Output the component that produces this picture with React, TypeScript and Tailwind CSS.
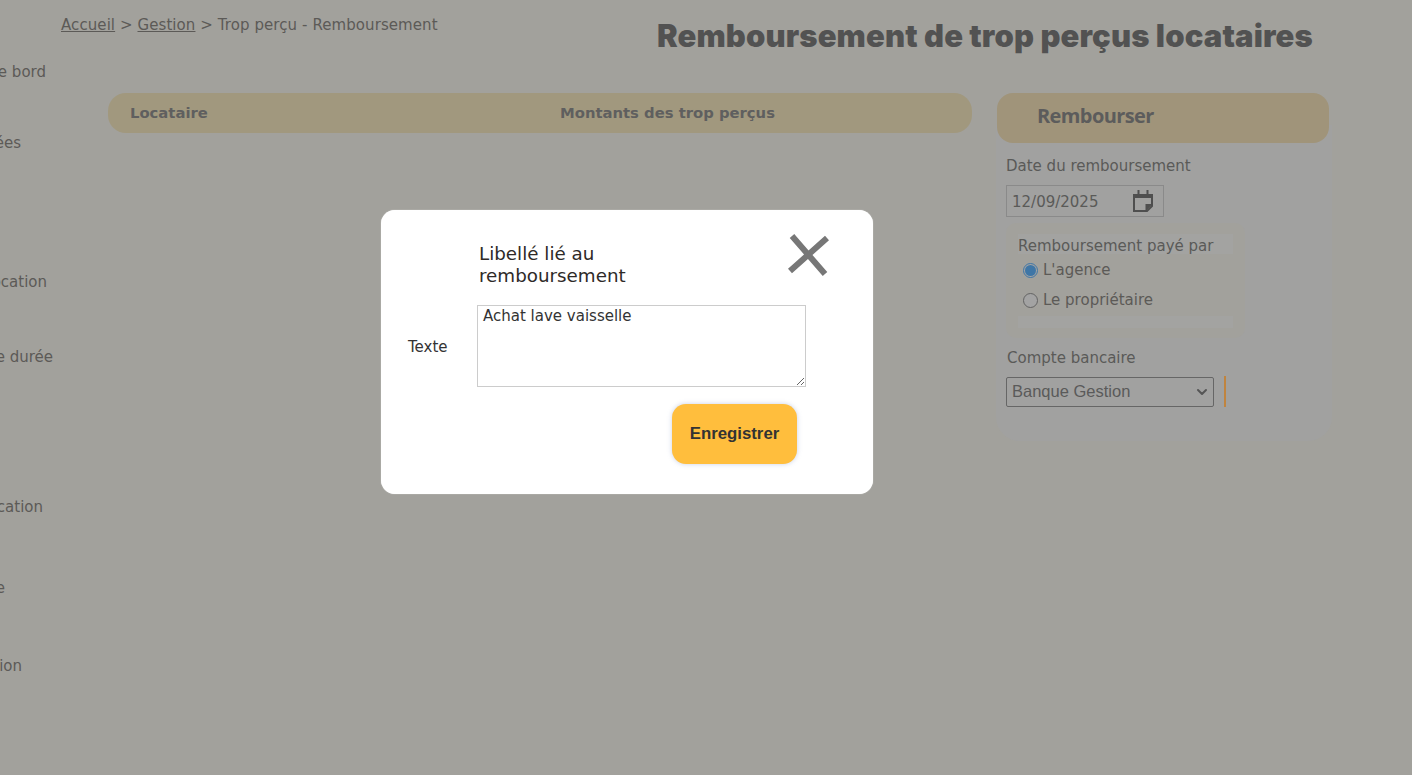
import { ChevronDown } from "lucide-react";

const sideItems = [
  { label: "Tableau de bord", cls: "mt-[62px] w-[46px]" },
  { label: "Données", cls: "mt-[51px] w-[21px]" },
  { label: "Location", cls: "mt-[119px] w-[47px]" },
  { label: "Longue durée", cls: "mt-[55px] w-[53px]" },
  { label: "Location", cls: "mt-[130px] w-[43px]" },
  { label: "Archive", cls: "mt-[61px] w-[5px]" },
  { label: "Gestion", cls: "mt-[58px] w-[22px]" },
];

function CalendarIcon() {
  return (
    <svg width="20" height="22" viewBox="0 0 20 22" fill="none" stroke="#4f4f4f" strokeWidth="2">
      <path d="M1 5h18v11l-5 5H1z" />
      <path d="M1 6.5h18" strokeWidth="3" />
      <path d="M5.5 0v4M14.5 0v4" />
      <path d="M19.5 14h-7v7.5z" fill="#4f4f4f" stroke="none" />
    </svg>
  );
}

function Radio({ checked, label }: { checked?: boolean; label: string }) {
  return (
    <label className="flex items-center gap-[5px] h-[20px]">
      <span className={`flex items-center justify-center w-[15px] h-[15px] rounded-full bg-[#a3a3a3] border ${checked ? "border-[#3f76a6]" : "border-[#636363]"}`}>
        {checked && <span className="w-[11px] h-[11px] rounded-full bg-[#3f76a6]" />}
      </span>
      <span className="text-[15px] text-[#5c5a57]">{label}</span>
    </label>
  );
}

function SidePanel() {
  return (
    <aside className="w-[336px] shrink-0">
      <div className="relative z-10 ml-[1px] w-[332px] h-[50px] rounded-[16px] bg-[#a0947a] pl-[40px] pb-[4px] flex items-center">
        <h2 className="text-[20px] font-bold tracking-[-0.6px] text-[#5c5c5c] font-['Open_Sans',sans-serif]">Rembourser</h2>
      </div>
      <div className="-mt-[18px] h-[316px] rounded-b-[24px] bg-[#a1a1a0] pt-[31px] px-[10px] text-[#5a5a58]">
        <p className="text-[15px] leading-[20px]">Date du remboursement</p>
        <div className="mt-[9px] w-[158px] h-[32px] border border-[#8a8a8a] flex items-center justify-between pl-[5px] pr-[10px]">
          <span className="pt-[2px] text-[15px]">12/09/2025</span>
          <CalendarIcon />
        </div>
        <div className="mt-[6px] w-[239px] h-[115px] rounded-[10px] bg-[#a2a19c] px-[12px] pt-[11px]">
          <div className="h-[20px] bg-[#a3a3a1] text-[15px] leading-[24px]">Remboursement payé par</div>
          <div className="mt-[6px] pl-[5px]">
            <Radio checked label="L'agence" />
            <div className="mt-[10px]">
              <Radio label="Le propriétaire" />
            </div>
          </div>
          <div className="mt-[6px] h-[12px] bg-[#a3a3a1]" />
        </div>
        <p className="mt-[10px] pl-[1px] text-[15px] leading-[20px]">Compte bancaire</p>
        <div className="mt-[8px] flex items-center gap-[10px]">
          <div className="w-[208px] h-[30px] border border-[#666] rounded-[2px] flex items-center justify-between pl-[5px] pr-[3px]">
            <span className="text-[16.5px] font-['Liberation_Sans',sans-serif] text-[#5a5a5a]">Banque Gestion</span>
            <ChevronDown size={16} strokeWidth={3} className="text-[#555]" />
          </div>
          <div className="w-[2px] h-[31px] bg-[#c0843f]" />
        </div>
      </div>
    </aside>
  );
}

export default function App() {
  return (
    <div className="relative flex w-[1412px] h-[775px] overflow-hidden bg-[#a2a19c] font-['DejaVu_Sans',sans-serif]">
      {/* Sidebar, mostly off screen */}
      <nav className="w-[61px] shrink-0 flex flex-col text-[15px] leading-[20px] text-[#5c5a57]">
        {sideItems.map((item, i) => (
          <div key={i} className={`${item.cls} flex justify-end whitespace-nowrap`}>
            {item.label}
          </div>
        ))}
      </nav>

      <main className="flex-1 min-w-0">
        <div className="flex h-[93px]">
          <div className="w-[596px] pt-[15px] text-[15px] leading-[20px] tracking-[0.08px] text-[#5c5a57] whitespace-nowrap">
            <a className="underline">Accueil</a> &gt; <a className="underline">Gestion</a> &gt; Trop perçu - Remboursement
          </div>
          <h1 className="pt-[18px] text-[31px] leading-[36px] font-black tracking-[0.13px] text-[#525252] font-['Inter',sans-serif] whitespace-nowrap">
            Remboursement de trop perçus locataires
          </h1>
        </div>
        <div className="flex pl-[47px] gap-[24px]">
          <div className="w-[864px] h-[40px] rounded-[18px] bg-[#a1987e] flex items-center pl-[22px] text-[14.8px] font-bold text-[#5f5f5f]">
            <span className="w-[430px]">Locataire</span>
            <span>Montants des trop perçus</span>
          </div>
          <SidePanel />
        </div>
      </main>

      {/* Modal */}
      <div className="absolute left-[381px] top-[210px] w-[492px] h-[284px] rounded-[14px] bg-white text-[#333] shadow-[0_0_1px_rgba(255,255,255,0.9)]">
        <svg className="absolute left-[405px] top-[23px]" width="44" height="44" viewBox="0 0 44 44" fill="none" stroke="#777" strokeWidth="6">
          <path d="M6 3L39 41M41 5L4 38" />
        </svg>
        <h3 className="absolute left-[98px] top-[33px] w-[190px] text-[18.3px] leading-[22px] text-[#2e2a28]">
          Libellé lié au remboursement
        </h3>
        <div className="absolute left-[27px] top-[95px] flex items-center gap-[28px]">
          <span className="w-[41px] pt-[2px] text-[15px] text-[#333]">Texte</span>
          <textarea
            defaultValue="Achat lave vaisselle"
            className="w-[329px] h-[82px] border border-[#ccc] px-[5px] py-[1px] text-[15px] leading-[18px] text-[#333] outline-none"
          />
        </div>
        <button className="absolute left-[291px] top-[194px] w-[125px] h-[60px] rounded-[14px] bg-[#ffbe3d] shadow-[0_0_5px_rgba(120,140,190,0.4)] text-[16.8px] font-bold text-[#333] font-['Liberation_Sans',sans-serif]">
          Enregistrer
        </button>
      </div>
    </div>
  );
}
